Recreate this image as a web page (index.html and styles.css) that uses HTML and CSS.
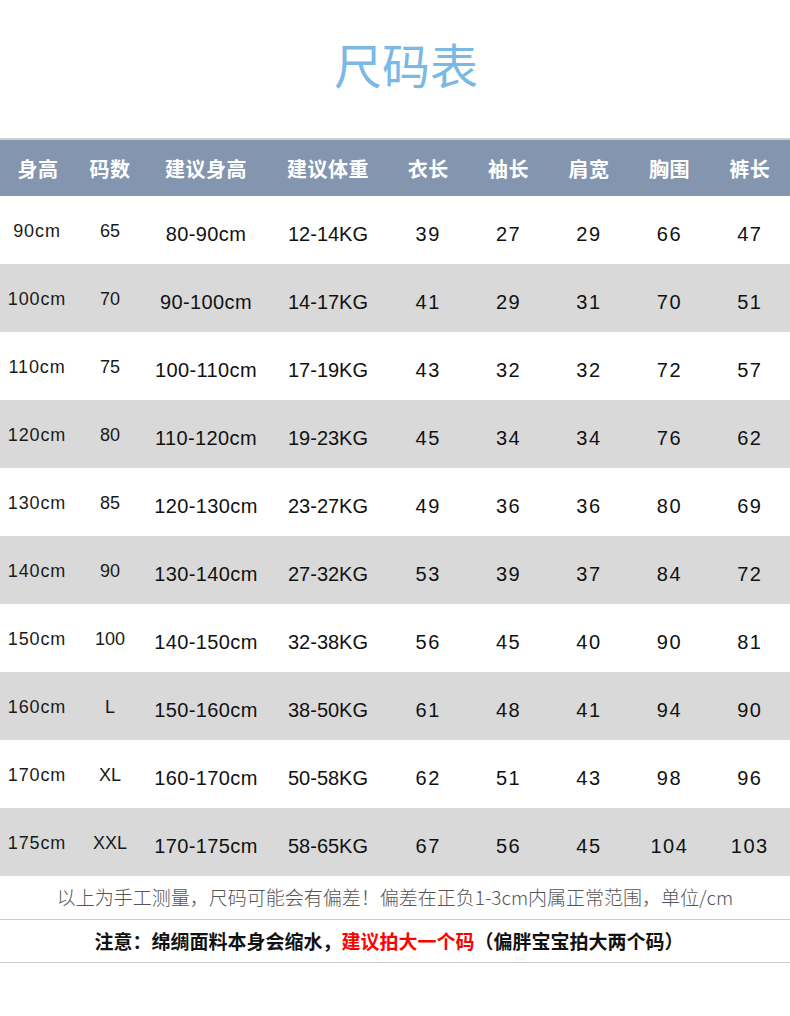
FILE: index.html
```html
<!DOCTYPE html>
<html lang="zh-CN">
<head>
<meta charset="utf-8">
<title>尺码表</title>
<link rel="stylesheet" href="styles.css">
</head>
<body>
<div class="page">
  <h1 class="title">尺码表</h1>
  <div class="table">
    <div class="row head">
      <div>身高</div><div>码数</div><div>建议身高</div><div>建议体重</div><div>衣长</div><div>袖长</div><div>肩宽</div><div>胸围</div><div>裤长</div>
    </div>
    <div class="row"><div class="c1">90cm</div><div class="c2">65</div><div>80-90cm</div><div>12-14KG</div><div>39</div><div>27</div><div>29</div><div>66</div><div>47</div></div>
    <div class="row alt"><div class="c1">100cm</div><div class="c2">70</div><div>90-100cm</div><div>14-17KG</div><div>41</div><div>29</div><div>31</div><div>70</div><div>51</div></div>
    <div class="row"><div class="c1">110cm</div><div class="c2">75</div><div>100-110cm</div><div>17-19KG</div><div>43</div><div>32</div><div>32</div><div>72</div><div>57</div></div>
    <div class="row alt"><div class="c1">120cm</div><div class="c2">80</div><div>110-120cm</div><div>19-23KG</div><div>45</div><div>34</div><div>34</div><div>76</div><div>62</div></div>
    <div class="row"><div class="c1">130cm</div><div class="c2">85</div><div>120-130cm</div><div>23-27KG</div><div>49</div><div>36</div><div>36</div><div>80</div><div>69</div></div>
    <div class="row alt"><div class="c1">140cm</div><div class="c2">90</div><div>130-140cm</div><div>27-32KG</div><div>53</div><div>39</div><div>37</div><div>84</div><div>72</div></div>
    <div class="row"><div class="c1">150cm</div><div class="c2">100</div><div>140-150cm</div><div>32-38KG</div><div>56</div><div>45</div><div>40</div><div>90</div><div>81</div></div>
    <div class="row alt"><div class="c1">160cm</div><div class="c2">L</div><div>150-160cm</div><div>38-50KG</div><div>61</div><div>48</div><div>41</div><div>94</div><div>90</div></div>
    <div class="row"><div class="c1">170cm</div><div class="c2">XL</div><div>160-170cm</div><div>50-58KG</div><div>62</div><div>51</div><div>43</div><div>98</div><div>96</div></div>
    <div class="row alt"><div class="c1">175cm</div><div class="c2">XXL</div><div>170-175cm</div><div>58-65KG</div><div>67</div><div>56</div><div>45</div><div>104</div><div>103</div></div>
  </div>
  <p class="note">以上为手工测量，尺码可能会有偏差！偏差在正负1-3cm内属正常范围，单位/cm</p>
  <p class="warn">注意：绵绸面料本身会缩水，<span class="red">建议拍大一个码</span>（偏胖宝宝拍大两个码）</p>
</div>
</body>
</html>
```

FILE: styles.css
```css
* { box-sizing: border-box; margin: 0; padding: 0; }
body {
  margin: 0;
  background: #ffffff;
  font-family: "Liberation Sans", "Noto Sans CJK SC", sans-serif;
}
.page { width: 790px; }
.title {
  height: 140px;
  padding-top: 37px;
  padding-left: 22px;
  text-align: center;
  font-family: "Noto Sans CJK SC", sans-serif;
  font-weight: 400;
  font-size: 48px;
  line-height: 52px;
  color: #7ab8e5;
  border-bottom: 2px solid #cfcfcf;
}
.row {
  display: grid;
  grid-template-columns: 76px 68px 124px 120px repeat(5, 1fr);
  height: 68px;
  align-items: center;
  text-align: center;
  font-size: 20px;
  color: #111;
}
.row > div { padding-top: 9px; white-space: nowrap; }
.row > div:nth-child(3) { letter-spacing: 0.4px; }
.row > div.c1, .row > div.c2 { padding-top: 2px; font-size: 18px; color: #1a1a1a; }
.row > div.c1 { letter-spacing: 0.9px; padding-right: 2px; }
.row > div:nth-child(n+5) { letter-spacing: 1.5px; }
.row.alt { background: #d9d9d9; }
.row.head {
  height: 56px;
  background: #8496af;
  color: #ffffff;
  font-family: "Noto Sans CJK SC", sans-serif;
  font-weight: 700;
  font-size: 20px;
}
.row.head > div { padding-top: 0; letter-spacing: 0.5px; }
.note {
  height: 44px;
  border-bottom: 1px solid #cccccc;
  text-align: center;
  font-family: "Noto Sans CJK SC", sans-serif;
  font-weight: 300;
  font-size: 19px;
  line-height: 42px;
  color: #555555;
}
.warn {
  height: 43px;
  border-bottom: 1px solid #cccccc;
  text-align: center;
  font-family: "Noto Sans CJK SC", sans-serif;
  font-weight: 700;
  font-size: 19px;
  line-height: 42px;
  color: #111111;
  padding-right: 12px;
}
.red { color: #ff0000; }
```
